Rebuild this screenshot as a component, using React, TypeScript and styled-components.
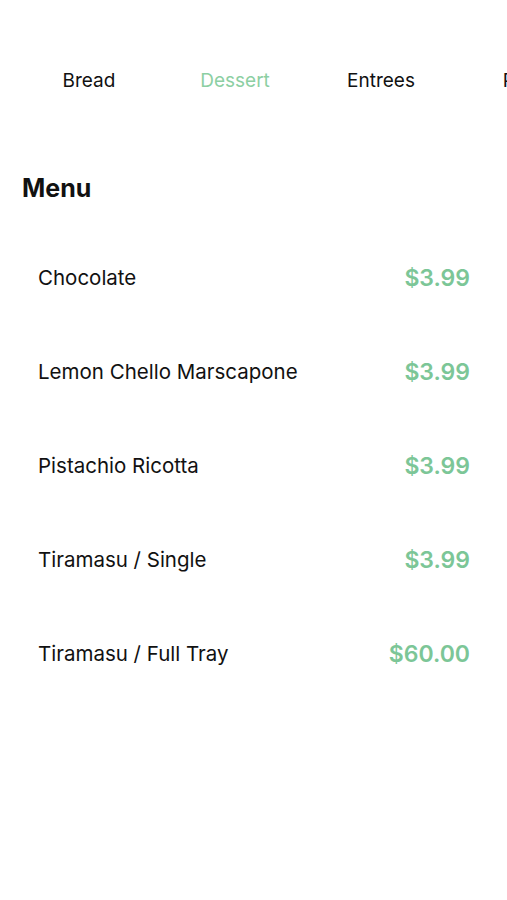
import { createGlobalStyle } from "styled-components";
import styled from "styled-components";

const GlobalStyle = createGlobalStyle`
  body {
    margin: 0;
    background: #ffffff;
    font-family: Inter, "Liberation Sans", Arial, sans-serif;
    color: #111111;
  }
`;

const tabs = ["Bread", "Dessert", "Entrees", "Pizza", "Salads"];
const items = [
  { name: "Chocolate", price: "$3.99" },
  { name: "Lemon Chello Marscapone", price: "$3.99" },
  { name: "Pistachio Ricotta", price: "$3.99" },
  { name: "Tiramasu / Single", price: "$3.99" },
  { name: "Tiramasu / Full Tray", price: "$60.00" },
];

export default function App() {
  return (
    <Page>
      <GlobalStyle />
      <TabBar>
        {tabs.map((t) => (
          <Tab key={t} $active={t === "Dessert"}>
            {t}
          </Tab>
        ))}
      </TabBar>
      <MenuTitle>Menu</MenuTitle>
      <List>
        {items.map((item) => (
          <Row key={item.name}>
            <ItemName>{item.name}</ItemName>
            <Price>{item.price}</Price>
          </Row>
        ))}
      </List>
    </Page>
  );
}

const Page = styled.main`
  width: 507px;
  height: 900px;
  overflow: hidden;
`;

const TabBar = styled.nav`
  display: flex;
  padding: 60px 0 0 16px;
  height: 40px;
  align-items: center;
  overflow: hidden;
  white-space: nowrap;
`;

const Tab = styled.div<{ $active: boolean }>`
  flex: 0 0 146px;
  text-align: center;
  font-size: 19px;
  color: ${(p) => (p.$active ? "#8ccfa3" : "#111111")};
`;

const MenuTitle = styled.h1`
  margin: 74px 0 0 22px;
  font-size: 25px;
  font-weight: 700;
  line-height: 28px;
`;

const List = styled.ul`
  list-style: none;
  margin: 29px 0 0 0;
  padding: 0 37px 0 38px;
`;

const Row = styled.li`
  display: flex;
  align-items: center;
  justify-content: space-between;
  height: 94px;
`;

const ItemName = styled.span`
  font-size: 20.5px;
  font-weight: 400;
  margin-top: -2px;
`;

const Price = styled.span`
  font-size: 23px;
  font-weight: 600;
  color: #7cc697;
`;
